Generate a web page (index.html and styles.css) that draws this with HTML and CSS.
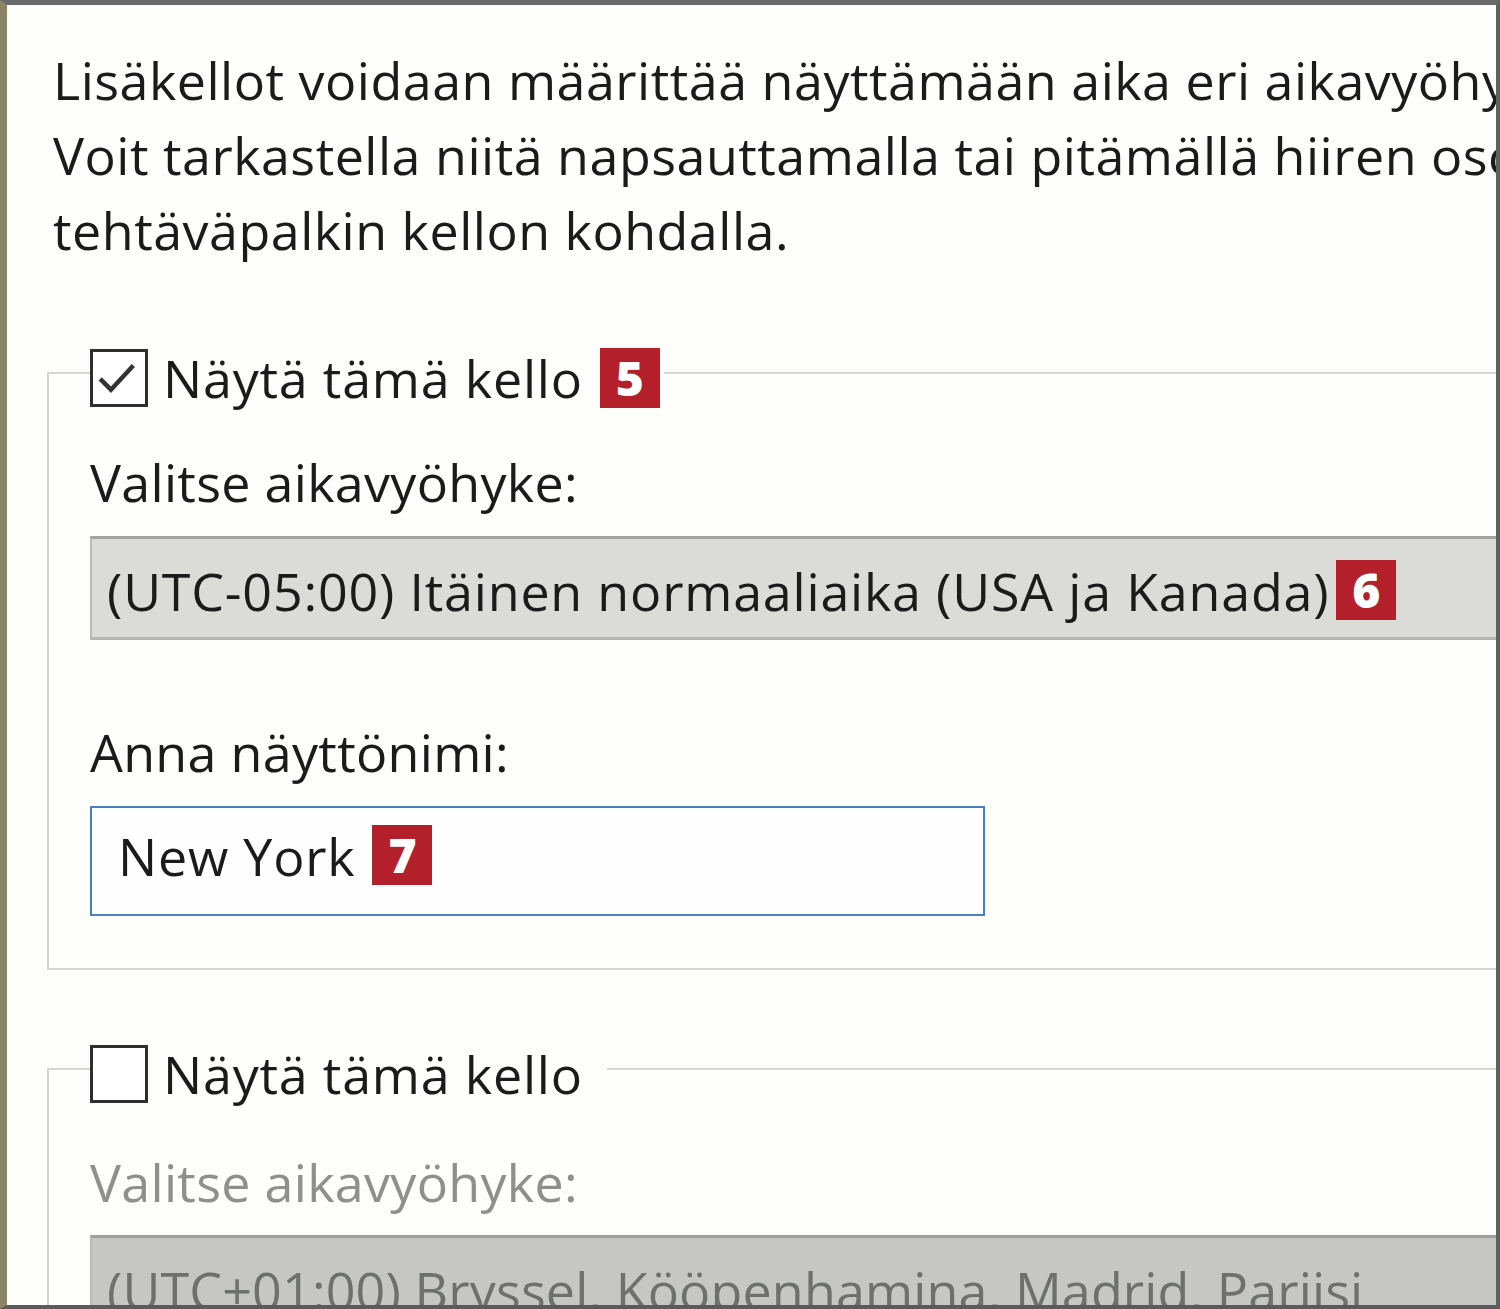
FILE: index.html
```html
<!DOCTYPE html>
<html lang="fi">
<head>
<meta charset="utf-8">
<title>Lisäkellot</title>
<link rel="stylesheet" href="styles.css">
</head>
<body>
<div class="window">
  <p class="intro">Lisäkellot voidaan määrittää näyttämään aika eri aikavyöhykkeillä.<br>Voit tarkastella niitä napsauttamalla tai pitämällä hiiren osoitinta<br>tehtäväpalkin kellon kohdalla.</p>

  <fieldset class="group group-first">
    <legend class="legend legend-badge">
      <span class="checkbox">
        <svg viewBox="0 0 58 58" width="52" height="52"><path d="M8 30 L20 42 L45 15" fill="none" stroke="#333" stroke-width="5" stroke-linejoin="miter"/></svg>
      </span>
      <span class="check-label">Näytä tämä kello</span>
      <span class="badge">5</span>
    </legend>
    <div class="field-label">Valitse aikavyöhyke:</div>
    <div class="combo">
      <span class="combo-text">(UTC-05:00) Itäinen normaaliaika (USA ja Kanada)</span>
      <span class="badge badge-tight">6</span>
    </div>
    <div class="field-label field-label-spaced">Anna näyttönimi:</div>
    <div class="textbox">
      <span class="textbox-text">New York</span>
      <span class="badge">7</span>
    </div>
  </fieldset>

  <fieldset class="group group-second">
    <legend class="legend legend-plain">
      <span class="checkbox"></span>
      <span class="check-label">Näytä tämä kello</span>
    </legend>
    <div class="field-label field-label-disabled">Valitse aikavyöhyke:</div>
    <div class="combo combo-disabled">
      <span class="combo-text">(UTC+01:00) Bryssel, Kööpenhamina, Madrid, Pariisi</span>
    </div>
  </fieldset>
</div>
</body>
</html>
```
FILE: styles.css
```css
* { box-sizing: border-box; }
html, body { margin: 0; padding: 0; }
body {
  background: #fdfdfb;
  font-family: "Open Sans", "Noto Sans", sans-serif;
  color: #1b1b1b;
  letter-spacing: 0.8px;
}
.window {
  width: 1500px;
  height: 1309px;
  background: #fdfdfb;
  border-left: 7px solid #8b8465;
  border-top: 5px solid #6a6a6a;
  border-right: 4px solid #5f5f5f;
  border-bottom: 4px solid #5a5a5a;
  overflow: hidden;
}
.intro {
  margin: 0;
  padding: 37px 0 0 46px;
  font-size: 52px;
  line-height: 75px;
  letter-spacing: 0.5px;
  white-space: nowrap;
}
.group {
  margin: 0 0 0 40px;
  padding: 0 0 0 41px;
  border: 2px solid #d6d6d3;
  border-right: none;
  min-width: 0;
}
.group-first { margin-top: 71px; padding-top: 39px; padding-bottom: 52px; }
.group-second { margin-top: 65px; padding-top: 44px; border-bottom: none; }
.legend {
  display: flex;
  align-items: center;
  padding: 10px 4px 0 0;
  font-size: 52px;
  line-height: 58px;
}
.legend-plain { padding-right: 24px; }
.checkbox {
  width: 58px;
  height: 58px;
  border: 3px solid #2e2e2e;
  background: #fff;
  display: flex;
  align-items: center;
  justify-content: center;
  flex: none;
}
.check-label { margin-left: 15px; }
.badge {
  display: inline-flex;
  align-items: center;
  justify-content: center;
  width: 60px;
  height: 60px;
  margin-left: 17px;
  background: #b3202b;
  color: #fff;
  font-family: "Open Sans", sans-serif;
  font-weight: 800;
  font-size: 48px;
  line-height: 1;
  letter-spacing: 0;
  flex: none;
}
.badge-tight { margin-left: 7px; }
.field-label {
  font-size: 52px;
  line-height: 70px;
  height: 70px;
  letter-spacing: 0.3px;
  white-space: nowrap;
}
.field-label-spaced { margin-top: 77px; }
.field-label-disabled { color: #8f8f8d; }
.combo {
  margin-top: 19px;
  height: 104px;
  background: #dbdbd8;
  border-top: 3px solid #a3a3a1;
  border-bottom: 3px solid #b4b4b2;
  border-left: 2px solid #b8b8b6;
  display: flex;
  align-items: center;
  padding: 4px 0 0 15px;
  font-size: 52px;
  white-space: nowrap;
}
.combo-disabled {
  margin-top: 18px;
  background: #c6c7c3;
  border-top-color: #9e9f9c;
  color: #6e706d;
  letter-spacing: 0.15px;
}
.textbox {
  margin-top: 19px;
  width: 895px;
  height: 110px;
  border: 2px solid #4a80c2;
  background: #fefefe;
  display: flex;
  align-items: center;
  padding: 0 0 12px 26px;
  font-size: 52px;
  white-space: nowrap;
}
```
